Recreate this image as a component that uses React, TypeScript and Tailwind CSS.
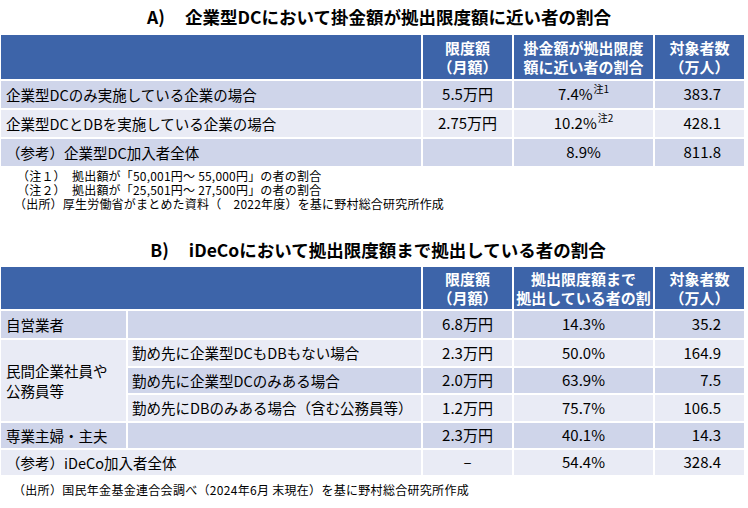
import React from "react";

const F = { fontFamily: '"Noto Sans CJK JP", "Noto Sans", sans-serif' };

const DARK = "bg-[#cfd5ea]";
const LIGHT = "bg-[#e9ebf5]";
const HEAD = "bg-[#3d64a9]";

function HeadCell({ l1, l2 }: { l1: string; l2: string }) {
  return (
    <div className={`${HEAD} flex flex-col items-center justify-center text-white font-bold text-[15px] leading-[19px]`}>
      <div>{l1}</div>
      <div>{l2}</div>
    </div>
  );
}

function Sup({ t }: { t: string }) {
  return <span className="text-[10px] relative -top-[6px] ml-[1px]">{t}</span>;
}

export default function App() {
  return (
    <div className="w-[748px] h-[508px] bg-white text-black overflow-hidden" style={F}>
      {/* Title A */}
      <div className="h-[35px] flex items-center justify-center pl-[10px] text-[17.5px] font-bold">
        <span>A)</span>
        <span className="ml-[20px]">企業型DCにおいて掛金額が拠出限度額に近い者の割合</span>
      </div>

      {/* Table A */}
      <div className="ml-[1px] w-[743px] grid grid-cols-[420px_89px_139px_89px] gap-[2px] text-[15px]">
        <div className={`${HEAD} h-[44px]`}></div>
        <HeadCell l1="限度額" l2="（月額）" />
        <HeadCell l1="掛金額が拠出限度" l2="額に近い者の割合" />
        <HeadCell l1="対象者数" l2="（万人）" />

        <div className={`${DARK} h-[27px] flex items-center pl-[5px] text-[14.5px]`}>企業型DCのみ実施している企業の場合</div>
        <div className={`${DARK} flex items-center justify-center`}>5.5万円</div>
        <div className={`${DARK} flex items-center justify-center`}>7.4%<Sup t="注1" /></div>
        <div className={`${DARK} flex items-center justify-end pr-[23px]`}>383.7</div>

        <div className={`${LIGHT} h-[27px] flex items-center pl-[5px] text-[14.5px]`}>企業型DCとDBを実施している企業の場合</div>
        <div className={`${LIGHT} flex items-center justify-center`}>2.75万円</div>
        <div className={`${LIGHT} flex items-center justify-center`}>10.2%<Sup t="注2" /></div>
        <div className={`${LIGHT} flex items-center justify-end pr-[23px]`}>428.1</div>

        <div className={`${DARK} h-[27px] flex items-center pl-[5px] text-[14.5px]`}>（参考）企業型DC加入者全体</div>
        <div className={`${DARK}`}></div>
        <div className={`${DARK} flex items-center justify-center`}>8.9%</div>
        <div className={`${DARK} flex items-center justify-end pr-[23px]`}>811.8</div>
      </div>

      {/* Notes A */}
      <div className="pt-[3px] pl-[17px] text-[12px] tracking-[0.2px]">
        <div className="h-[14px] leading-[14px]">（注１）　拠出額が「50,001円～ 55,000円」の者の割合</div>
        <div className="h-[14px] leading-[14px]">（注２）　拠出額が「25,501円～ 27,500円」の者の割合</div>
        <div className="h-[14px] leading-[14px] -ml-[3px]">（出所）厚生労働省がまとめた資料（　2022年度）を基に野村総合研究所作成</div>
      </div>

      {/* Title B */}
      <div className="mt-[22px] h-[34px] flex items-center justify-center pl-[8px] text-[17.5px] font-bold">
        <span>B)</span>
        <span className="ml-[20px]">iDeCoにおいて拠出限度額まで拠出している者の割合</span>
      </div>

      {/* Table B */}
      <div className="ml-[1px] w-[743px] grid grid-cols-[125px_293px_89px_139px_89px] gap-[2px] text-[15px]">
        <div className={`${HEAD} col-span-2 h-[42px]`}></div>
        <HeadCell l1="限度額" l2="（月額）" />
        <HeadCell l1="拠出限度額まで" l2="拠出している者の割" />
        <HeadCell l1="対象者数" l2="（万人）" />

        <div className={`${DARK} h-[27px] flex items-center pl-[5px] text-[14.5px]`}>自営業者</div>
        <div className={`${DARK}`}></div>
        <div className={`${DARK} flex items-center justify-center`}>6.8万円</div>
        <div className={`${DARK} flex items-center justify-center`}>14.3%</div>
        <div className={`${DARK} flex items-center justify-end pr-[23px]`}>35.2</div>

        <div className={`${LIGHT} row-span-3 flex items-center pl-[5px] leading-[20px] text-[14.5px]`}>
          民間企業社員や
          <br />
          公務員等
        </div>
        <div className={`${LIGHT} h-[26px] flex items-center pl-[4px] text-[14.5px]`}>勤め先に企業型DCもDBもない場合</div>
        <div className={`${LIGHT} flex items-center justify-center`}>2.3万円</div>
        <div className={`${LIGHT} flex items-center justify-center`}>50.0%</div>
        <div className={`${LIGHT} flex items-center justify-end pr-[23px]`}>164.9</div>

        <div className={`${DARK} h-[25px] flex items-center pl-[4px] text-[14.5px]`}>勤め先に企業型DCのみある場合</div>
        <div className={`${DARK} flex items-center justify-center`}>2.0万円</div>
        <div className={`${DARK} flex items-center justify-center`}>63.9%</div>
        <div className={`${DARK} flex items-center justify-end pr-[23px]`}>7.5</div>

        <div className={`${LIGHT} h-[26px] flex items-center pl-[4px] text-[14.5px]`}>勤め先にDBのみある場合（含む公務員等）</div>
        <div className={`${LIGHT} flex items-center justify-center`}>1.2万円</div>
        <div className={`${LIGHT} flex items-center justify-center`}>75.7%</div>
        <div className={`${LIGHT} flex items-center justify-end pr-[23px]`}>106.5</div>

        <div className={`${DARK} h-[25px] flex items-center pl-[5px] text-[14.5px]`}>専業主婦・主夫</div>
        <div className={`${DARK}`}></div>
        <div className={`${DARK} flex items-center justify-center`}>2.3万円</div>
        <div className={`${DARK} flex items-center justify-center`}>40.1%</div>
        <div className={`${DARK} flex items-center justify-end pr-[23px]`}>14.3</div>

        <div className={`${LIGHT} col-span-2 h-[25px] flex items-center pl-[5px] text-[14.5px]`}>（参考）iDeCo加入者全体</div>
        <div className={`${LIGHT} flex items-center justify-center`}>–</div>
        <div className={`${LIGHT} flex items-center justify-center`}>54.4%</div>
        <div className={`${LIGHT} flex items-center justify-end pr-[23px]`}>328.4</div>
      </div>

      {/* Footer B */}
      <div className="mt-[8px] pl-[13px] text-[12px] leading-[14px] tracking-[0.3px]">
        （出所）国民年金基金連合会調べ（2024年6月 末現在）を基に野村総合研究所作成
      </div>
    </div>
  );
}
